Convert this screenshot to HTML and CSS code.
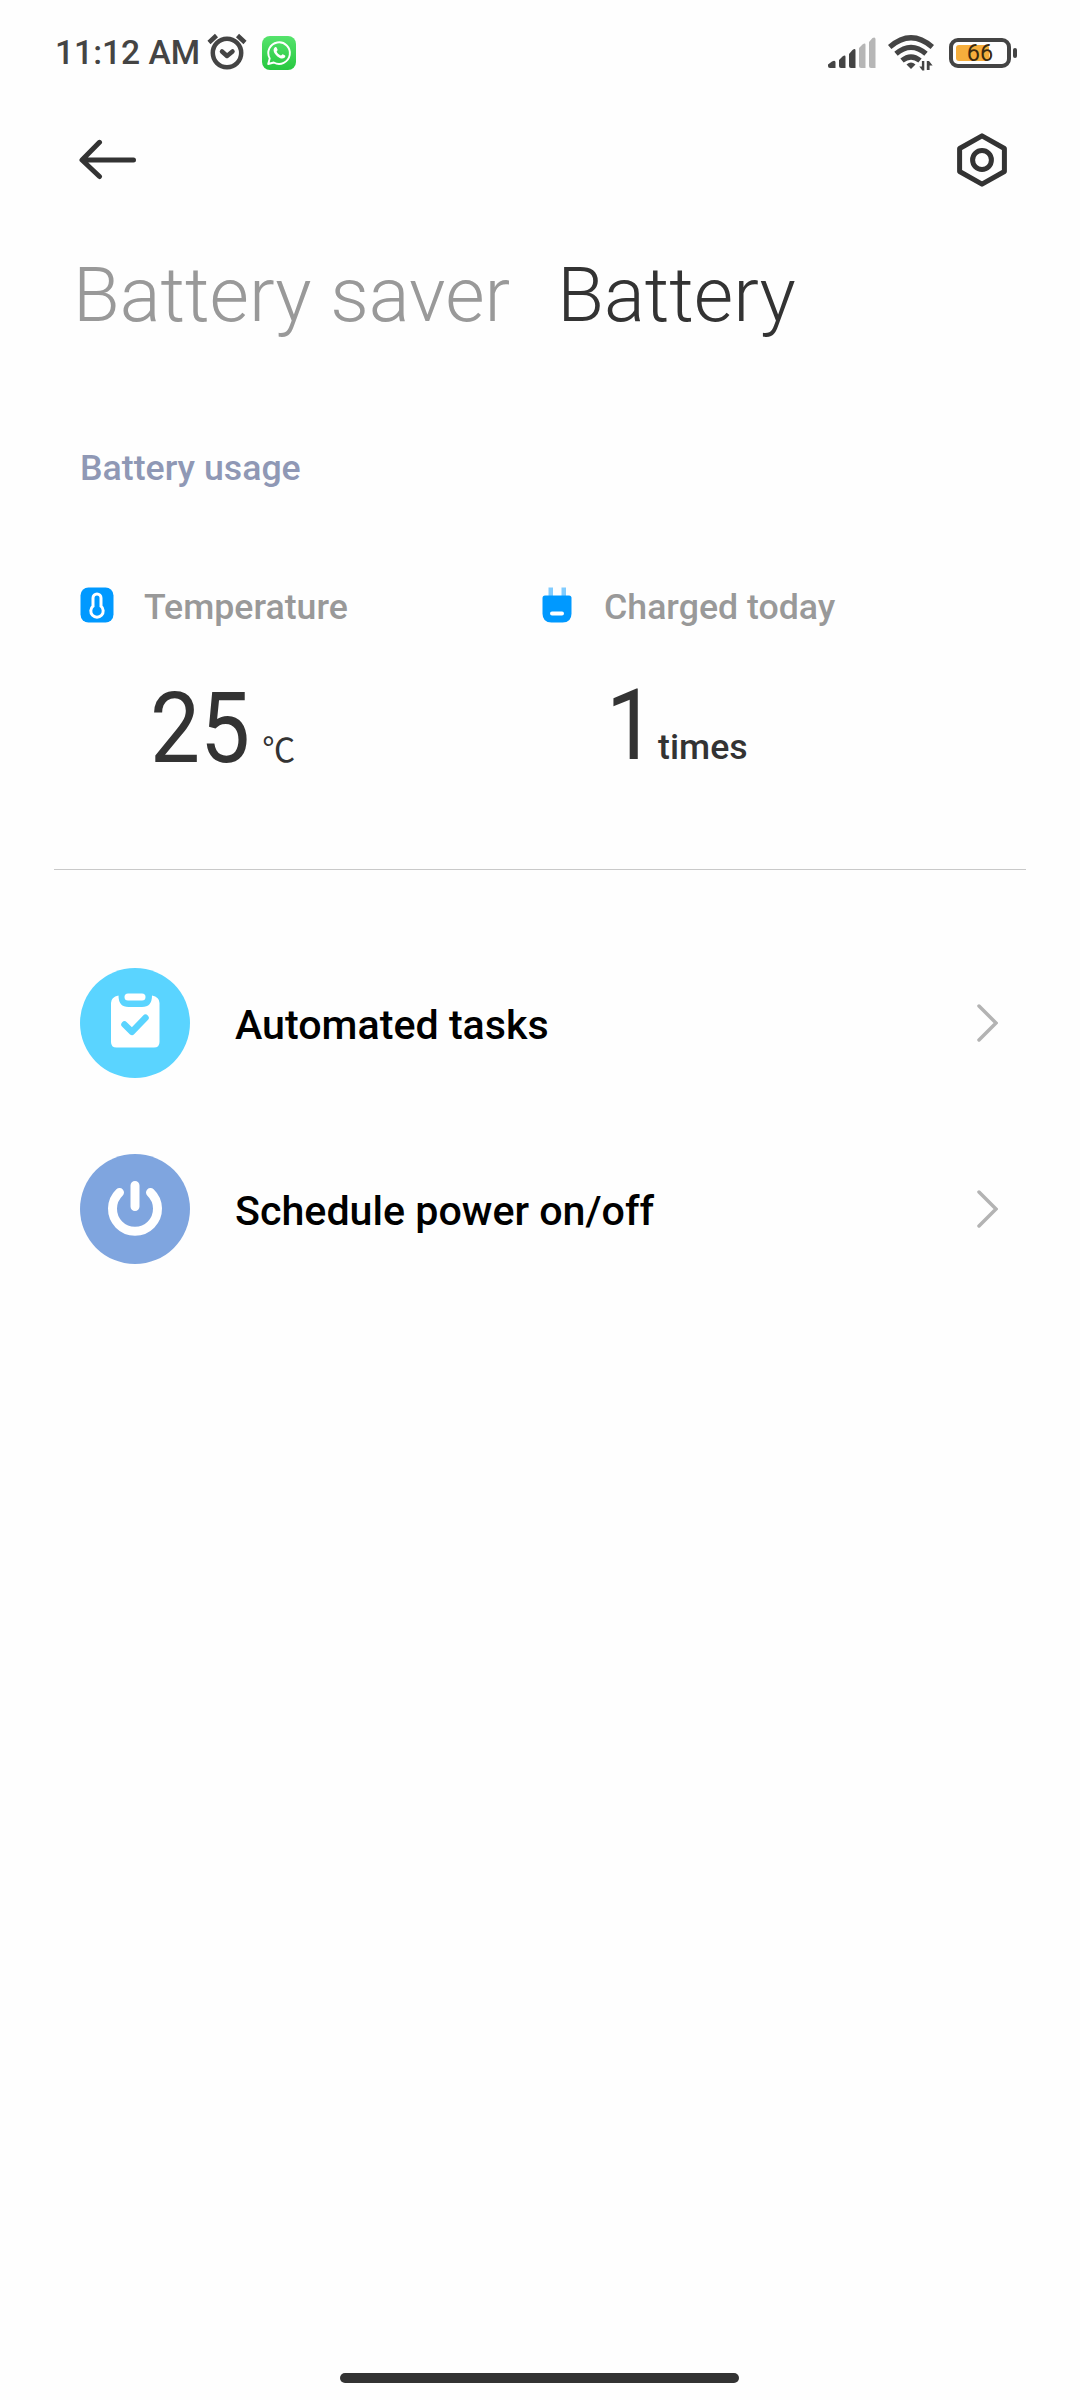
FILE: index.html
```html
<!DOCTYPE html>
<html lang="en">
<head>
  <meta charset="UTF-8" />
  <title>Battery</title>
  <meta name="viewport" content="width=device-width, initial-scale=1.0" />
  <link rel="stylesheet" href="styles.css">
</head>
<body>
  <div class="screen">
    <div class="status-bar">
      <span class="time">11:12 AM</span>
      <svg class="alarm" width="40" height="37" viewBox="0 0 40 37" fill="none" stroke="#444" stroke-width="4.500" stroke-linecap="round" stroke-linejoin="round">
        <circle cx="20" cy="20" r="14.2" />
        <path d="M2 9.500 9.500 2.500M30.500 2.500l7.500 7" stroke-linecap="butt" />
        <path d="M15 18.5l5 4.5 5.5-4.5" />
      </svg>
      <svg class="whatsapp" width="34" height="34" viewBox="0 0 34 34">
        <defs>
          <linearGradient id="green" x1="0" y1="0" x2="0" y2="1">
            <stop offset="0" stop-color="#55e36c" />
            <stop offset="1" stop-color="#27c840" />
          </linearGradient>
        </defs>
        <rect width="34" height="34" rx="8" fill="url(#green)" />
        <path d="M6.2 28l1.5-5.6A10.8 10.8 0 1 1 11.8 26.500z" fill="none" stroke="#fff" stroke-width="1.9" stroke-linejoin="round" />
        <path d="M13 11.300c.8-.5 1.500-.2 1.700.4l.9 2.100c.2.600-1 1.500-.9 1.900.8 1.700 2.300 3 4.100 3.700.6.200 1.400-1.500 2-1.200l2.300 1.200c.7.400-.1 2.200-1 2.700-2 1.100-4.600.1-6.700-1.600-2-1.600-3.800-4-3.800-6.200 0-1.200.6-2.400 1.400-3z" fill="#fff" />
      </svg>
      <svg class="signal" width="48" height="32" viewBox="0 0 48 32">
        <g fill="#444">
          <path d="M0 27.500 4 24.500Q7.500 22.500 7.500 25.500V31H2Q0 31 0 29z" />
          <path d="M11 23l3.500-3.500Q17.500 17.500 17.500 20V31H13Q11 31 11 29z" />
          <path d="M21 17l3.500-4Q27.500 11 27.500 13.500V31H23Q21 31 21 29z" />
        </g>
        <g fill="#b6b6b6">
          <path d="M31 11l3.500-3.500Q37.500 5.500 37.500 8V31H33Q31 31 31 29z" />
          <path d="M41 5l3.500-4Q47.500-.5 47.500 2.500V31H43Q41 31 41 29z" />
        </g>
      </svg>
      <svg class="wifi" width="46" height="36" viewBox="0 0 46 36" fill="none" stroke="#444" stroke-width="5.200">
        <path d="M1.700 12Q23-6.500 44.300 12" />
        <path d="M8 18.800Q23 6 38 18.800" />
        <path d="M14 25.600Q23 18.300 32 25.600" />
        <path d="M18.500 29.500q4.500-4 9 0L23 34z" fill="#444" stroke="none" />
        <path d="M36.300 26v9.500h-2l-3-4h2.600V26zM38.800 35V26h2.200l3.600 4.500h-3V35z" fill="#444" stroke="none" />
      </svg>
      <div class="battery"><span class="battery-level"></span><span class="battery-text">66</span></div>
      <span class="battery-cap"></span>
    </div>

    <header class="toolbar">
      <svg width="58" height="42" viewBox="0 0 58 42" fill="none" stroke="#333" stroke-width="5" stroke-linecap="round" stroke-linejoin="round">
        <path d="M20.500 3.300 3 21l17.500 16.500M4 21h50.500" />
      </svg>
      <svg width="50" height="54" viewBox="0 0 50 54" fill="none" stroke="#333" stroke-width="5" stroke-linejoin="round">
        <path d="M25 2.800 47.400 15.500V38.500L25 51.200 2.600 38.500V15.500z" />
        <circle cx="25" cy="27" r="9.400" />
      </svg>
    </header>

    <nav class="tabs">
      <span class="tab">Battery saver</span>
      <span class="tab active">Battery</span>
    </nav>

    <h2 class="section-title">Battery usage</h2>

    <div class="stats">
      <div class="stat">
        <div class="stat-label">
          <svg width="34" height="36" viewBox="0 0 34 36">
            <rect x="0.500" y="0.500" width="33" height="35" rx="8" fill="#0099ff" />
            <path d="M13 11a4 4 0 0 1 8 0v8.200a6.200 6.200 0 1 1-8 0z" fill="none" stroke="#fff" stroke-width="3" />
            <path d="M17 16v7" stroke="#0099ff" stroke-width="3" />
          </svg>
          <span>Temperature</span>
        </div>
        <div class="stat-value">
          <span class="number">25</span>
          <span class="unit degree">℃</span>
        </div>
      </div>
      <div class="stat charged">
        <div class="stat-label">
          <svg width="34" height="36" viewBox="0 0 34 36">
            <path d="M8.500.5h4.500v9H8.500zM21.500.5H26v9h-4.500z" fill="#80ccff" />
            <path d="M5 8.500h24q2.500 0 2.500 2.500v15.500q0 9-9 9h-11q-9 0-9-9V11Q2.500 8.500 5 8.500z" fill="#0099ff" />
            <path d="M12 26.500h10" stroke="#fff" stroke-width="4" stroke-linecap="round" />
          </svg>
          <span>Charged today</span>
        </div>
        <div class="stat-value">
          <span class="number">1</span>
          <span class="unit">times</span>
        </div>
      </div>
    </div>

    <div class="list">
      <div class="row">
        <svg width="110" height="110" viewBox="0 0 110 110">
          <circle cx="55" cy="55" r="55" fill="#5ad4ff" />
          <path d="M38.500 27.500Q31 29 31 35V74q0 5.500 5.500 5.500h37.500q5.500 0 5.500-5.500V35q0-6-7.500-7.500Q72 39 62 39H48.500Q38.500 39 38.500 27.500z" fill="#fff" />
          <path d="M48 29h14" stroke="#fff" stroke-width="7" stroke-linecap="round" />
          <path d="M44.500 56.500l7.500 7.300 13.500-14" fill="none" stroke="#5ad4ff" stroke-width="6.500" stroke-linecap="round" stroke-linejoin="round" />
        </svg>
        <span class="row-title">Automated tasks</span>
        <svg class="chevron" width="21" height="38" viewBox="0 0 21 38">
          <path d="M2 2l17 17L2 36" />
        </svg>
      </div>
      <div class="row">
        <svg width="110" height="110" viewBox="0 0 110 110" fill="none" stroke="#fff" stroke-width="9" stroke-linecap="round">
          <circle cx="55" cy="55" r="55" fill="#7fa5df" stroke="none" />
          <path d="M55 31.500v21M39.500 38.500a22.500 22.500 0 1 0 31 0" />
        </svg>
        <span class="row-title">Schedule power on/off</span>
        <svg class="chevron" width="21" height="38" viewBox="0 0 21 38">
          <path d="M2 2l17 17L2 36" />
        </svg>
      </div>
    </div>

    <div class="home-bar"></div>
  </div>
</body>
</html>
```
FILE: styles.css
```css
* {
  box-sizing: border-box;
}

body {
  margin: 0;
  background: #fefefe;
  font-family: Roboto, sans-serif;
  color: #333;
}

svg {
  display: block;
  flex: none;
}

.screen {
  width: 1080px;
  height: 2400px;
  display: flex;
  flex-direction: column;
}

/* status bar */
.status-bar {
  height: 105px;
  padding: 0 63px 0 55px;
  display: flex;
  align-items: center;
}

.time {
  width: 152px;
  font-size: 33.600px;
  font-weight: 500;
  line-height: 40px;
  color: #444;
  white-space: nowrap;
}

.alarm {
  margin-top: -2px;
}

.whatsapp {
  margin-left: 15px;
}

.signal {
  margin-left: auto;
}

.wifi {
  margin-left: 12px;
}

.battery {
  position: relative;
  width: 62px;
  height: 30px;
  margin-left: 15px;
  padding: 3px;
  border: 4px solid #444;
  border-radius: 9px;
}

.battery-level {
  display: block;
  width: 33px;
  height: 16px;
  border-radius: 3px;
  background: #f6ae3c;
}

.battery-text {
  position: absolute;
  inset: 0;
  font-size: 23.500px;
  line-height: 23px;
  text-align: center;
  color: #3a2a10;
}

.battery-cap {
  width: 4px;
  height: 10px;
  margin-left: 2px;
  border-radius: 2px;
  background: #444;
}

.toolbar {
  height: 110px;
  padding: 0 73px 0 79px;
  display: flex;
  align-items: center;
  justify-content: space-between;
}

.tabs {
  margin-top: 30px;
  padding-left: 73px;
  display: flex;
  gap: 47px;
}

.tab {
  font-size: 76.200px;
  font-weight: 300;
  line-height: 100px;
  color: #999;
  white-space: nowrap;
}

.tab.active {
  color: #333;
}

.section-title {
  margin: 98px 0 0;
  padding-left: 80px;
  font-size: 35.700px;
  font-weight: 500;
  line-height: 50px;
  color: #8f98b5;
}

/* temperature and charge count */
.stats {
  width: 972px;
  height: 290px;
  margin: 87px 54px 0;
  padding-left: 26px;
  display: flex;
  border-bottom: 1px solid #c9c9c9;
}

.stat {
  width: 460px;
}

.stat-label {
  height: 50px;
  display: flex;
  align-items: center;
  gap: 30px;
  font-size: 35.700px;
  font-weight: 500;
  color: #999;
}

.stat-label span {
  padding-top: 3px;
}

.stat-value {
  margin-top: 49px;
  padding-left: 70px;
  display: flex;
  align-items: baseline;
  line-height: 100px;
}

.charged .stat-value {
  margin-top: 46px;
  padding-left: 66px;
}

.number {
  font-size: 98px;
  transform: scaleX(0.910);
  transform-origin: left;
}

.unit {
  font-size: 35.700px;
  font-weight: 500;
}

.charged .unit {
  margin-left: -3px;
}

.degree {
  margin-left: 2px;
  font-family: "Noto Sans CJK SC", sans-serif;
  font-size: 33px;
  font-weight: 400;
}

/* settings list */
.list {
  margin-top: 60px;
}

.row {
  height: 186px;
  padding: 0 82px 0 80px;
  display: flex;
  align-items: center;
}

.row-title {
  margin-left: 45px;
  padding-top: 3px;
  flex: 1;
  font-size: 41.200px;
  font-weight: 500;
  color: #000;
}

.chevron path {
  fill: none;
  stroke: #b3b3b3;
  stroke-width: 3.500px;
  stroke-linecap: round;
}

.home-bar {
  width: 399px;
  height: 10px;
  margin: auto auto 17px 340px;
  border-radius: 5px;
  background: #333;
}
```
